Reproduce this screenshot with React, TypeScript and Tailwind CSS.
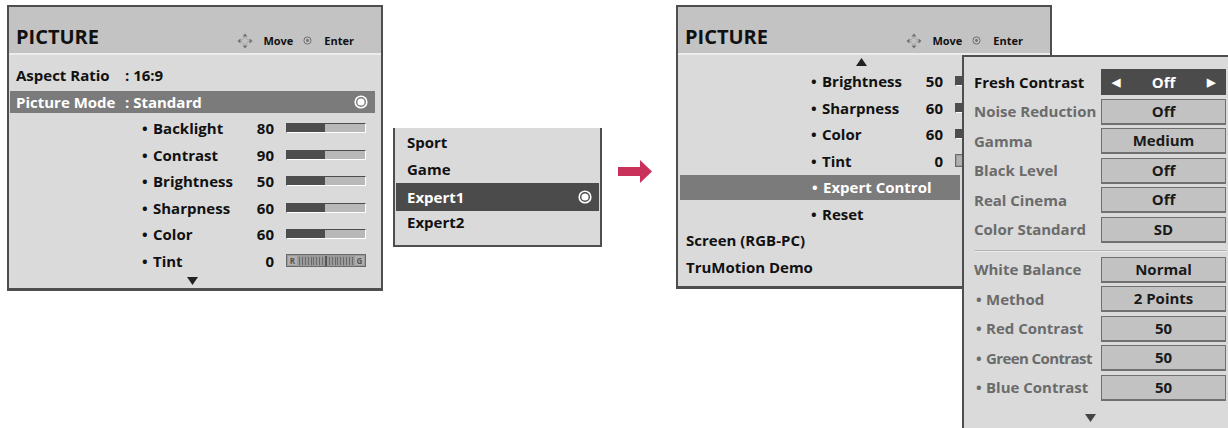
import React from 'react';

const subItems = [
  { label: 'Backlight', value: '80' },
  { label: 'Contrast', value: '90' },
  { label: 'Brightness', value: '50' },
  { label: 'Sharpness', value: '60' },
  { label: 'Color', value: '60' },
];

const expertRows = [
  { label: 'Noise Reduction', value: 'Off' },
  { label: 'Gamma', value: 'Medium' },
  { label: 'Black Level', value: 'Off' },
  { label: 'Real Cinema', value: 'Off' },
  { label: 'Color Standard', value: 'SD' },
];

const balanceRows = [
  { label: 'Method', value: '2 Points' },
  { label: 'Red Contrast', value: '50' },
  { label: 'Green Contrast', value: '50', tight: true },
  { label: 'Blue Contrast', value: '50' },
];

function MoveIcon() {
  return (
    <svg width="16" height="16" viewBox="0 0 16 16">
      <polygon points="8,0.5 10.5,3.5 5.5,3.5" fill="#6f6f6f" />
      <polygon points="8,15.5 10.5,12.5 5.5,12.5" fill="#6f6f6f" />
      <polygon points="0.5,8 3.5,5.5 3.5,10.5" fill="#6f6f6f" />
      <polygon points="15.5,8 12.5,5.5 12.5,10.5" fill="#6f6f6f" />
      <circle cx="8" cy="8" r="3.2" fill="none" stroke="#8a8a8a" strokeWidth="1" strokeDasharray="1.2 1" />
    </svg>
  );
}

function EnterIcon() {
  return (
    <svg width="9" height="9" viewBox="0 0 9 9">
      <circle cx="4.5" cy="4.5" r="3.6" fill="none" stroke="#6f6f6f" strokeWidth="1" />
      <circle cx="4.5" cy="4.5" r="1.4" fill="#6f6f6f" />
    </svg>
  );
}

function RadioIcon() {
  return (
    <svg width="14" height="14" viewBox="0 0 14 14">
      <circle cx="7" cy="7" r="5.8" fill="none" stroke="#ffffff" strokeWidth="1.6" />
      <circle cx="7" cy="7" r="3.6" fill="#ffffff" />
    </svg>
  );
}

function Triangle({ up = false }: { up?: boolean }) {
  return (
    <svg width="11" height="8" viewBox="0 0 11 8">
      {up ? <polygon points="5.5,0 11,8 0,8" fill="#222" /> : <polygon points="0,0 11,0 5.5,8" fill="#222" />}
    </svg>
  );
}

function Header() {
  return (
    <div className="h-[48px] bg-[#c3c3c3] border-b-2 border-[#ececec] flex items-end pb-[2px] pl-[7px] pr-[27px]">
      <span className="text-[20px] font-bold text-[#111] leading-[28px]">PICTURE</span>
      <div className="ml-auto flex items-center mb-[2px] text-[11px] font-bold text-[#111]">
        <MoveIcon />
        <span className="ml-[10px]">Move</span>
        <span className="ml-[10px]"><EnterIcon /></span>
        <span className="ml-[12px]">Enter</span>
      </div>
    </div>
  );
}

function Bar() {
  return (
    <div className="ml-[12px] w-[80px] h-[10px] shrink-0 flex border-t border-l border-[#4d4d4d] border-b border-r border-b-white border-r-white">
      <div className="w-[38px] bg-[#4d4d4d]" />
      <div className="flex-1 bg-[#b8b8b8]" />
    </div>
  );
}

function TintBar({ letters = true }: { letters?: boolean }) {
  const ticks = Array.from({ length: 19 });
  return (
    <div className="ml-[12px] w-[80px] h-[13px] shrink-0 bg-[#9a9a9a] border border-[#6a6a6a] flex items-center px-[1px]">
      <span className="w-[9px] h-[9px] bg-[#b0b0b0] text-[8px] leading-[9px] font-bold text-[#555] text-center">{letters ? 'R' : ''}</span>
      <div className="flex-1 flex items-center justify-between px-[2px]">
        {ticks.map((_, i) => (
          <span key={i} className={i === 9 ? 'w-[2px] h-[10px] bg-[#555]' : 'w-[1px] h-[8px] bg-[#6a6a6a]'} />
        ))}
      </div>
      <span className="w-[9px] h-[9px] bg-[#b0b0b0] text-[8px] leading-[9px] font-bold text-[#555] text-center">{letters ? 'G' : ''}</span>
    </div>
  );
}

function SubRow({ label, value, bar }: { label: string; value?: string; bar?: React.ReactNode }) {
  return (
    <div className="h-[26.5px] flex items-center pl-[133px] text-[15px] font-bold text-[#111]">
      <span className="w-[11px] shrink-0">•</span>
      <span className="w-[90px] shrink-0">{label}</span>
      <span className="w-[31px] shrink-0 text-right">{value}</span>
      {bar}
    </div>
  );
}

function LeftPanel() {
  return (
    <div className="ml-[7px] mt-[5px] w-[376px] h-[286px] bg-[#dadada] border-x-2 border-t-2 border-b-[3px] border-[#4e4e4e] flex flex-col">
      <Header />
      <div className="pt-[7px] flex flex-col">
        <div className="h-[26.5px] flex items-center pl-[7px] text-[15px] font-bold text-[#111]">
          <span className="w-[109px]">Aspect Ratio</span>
          <span>: 16:9</span>
        </div>
        <div className="h-[26.5px] flex items-center">
          <div className="ml-[1px] mr-[6px] flex-1 h-[22px] bg-[#7b7b7b] flex items-center pl-[6px] pr-[7px] text-[15px] font-bold text-white">
            <span className="w-[109px]">Picture Mode</span>
            <span>: Standard</span>
            <span className="ml-auto"><RadioIcon /></span>
          </div>
        </div>
        {subItems.map((s) => (
          <SubRow key={s.label} label={s.label} value={s.value} bar={<Bar />} />
        ))}
        <SubRow label="Tint" value="0" bar={<TintBar />} />
        <div className="flex pl-[178px] pt-[3px]">
          <Triangle />
        </div>
      </div>
    </div>
  );
}

function ModePopup() {
  return (
    <div className="ml-[10px] mt-[128px] w-[209px] h-[119px] bg-[#dadada] border-x-2 border-b-2 border-[#4e4e4e] pt-[1px] flex flex-col text-[15px] font-bold text-[#111]">
      <div className="h-[26.5px] flex items-center pl-[12px]">Sport</div>
      <div className="h-[26.5px] flex items-center pl-[12px]">Game</div>
      <div className="h-[26.5px] flex items-center">
        <div className="mx-[1px] flex-1 h-[28px] bg-[#4b4b4b] text-white flex items-center pl-[11px] pr-[7px] mt-[3px]">
          <span>Expert1</span>
          <span className="ml-auto"><RadioIcon /></span>
        </div>
      </div>
      <div className="h-[26.5px] flex items-center pl-[12px]">Expert2</div>
    </div>
  );
}

function ArrowMark() {
  return (
    <div className="ml-[16px] mt-[160px]">
      <svg width="34" height="23" viewBox="0 0 34 23">
        <rect x="0" y="7" width="23" height="9" fill="#c9305a" />
        <polygon points="22,0 34,11.5 22,23" fill="#c9305a" />
      </svg>
    </div>
  );
}

function ValueBox({ children, active = false }: { children: React.ReactNode; active?: boolean }) {
  return (
    <div
      className={
        active
          ? 'w-[125px] h-[26px] bg-[#4b4b4b] text-white flex items-center justify-between px-[11px] text-[15px] font-bold'
          : 'w-[125px] h-[26px] bg-[#c2c2c2] border border-[#707070] border-b-2 text-[#1a1a1a] flex items-center justify-center text-[15px] font-bold'
      }
    >
      {children}
    </div>
  );
}

function ExpertMenu() {
  return (
    <div className="absolute left-[286px] top-[50px] w-[266px] h-[380px] bg-[#dadada] border-l-2 border-t-2 border-[#4e4e4e] pt-[12px] pl-[10px] flex flex-col gap-[3.5px]">
      <div className="flex items-center">
        <span className="w-[127px] text-[15px] font-bold text-[#111]">Fresh Contrast</span>
        <ValueBox active>
          <span className="text-[11px]">◀</span>
          <span>Off</span>
          <span className="text-[11px]">▶</span>
        </ValueBox>
      </div>
      {expertRows.map((r) => (
        <div key={r.label} className="flex items-center">
          <span className="w-[127px] text-[15px] font-bold text-[#6b6b6b]">{r.label}</span>
          <ValueBox>{r.value}</ValueBox>
        </div>
      ))}
      <div className="mt-[4px] mb-[1px] mr-[2px] ml-[1px] h-[2px] border-t border-[#b3b3b3] border-b border-b-[#ececec]" />
      <div className="flex items-center">
        <span className="w-[127px] text-[15px] font-bold text-[#6b6b6b]">White Balance</span>
        <ValueBox>Normal</ValueBox>
      </div>
      {balanceRows.map((r) => (
        <div key={r.label} className="flex items-center">
          <span className={(r.tight ? 'tracking-[-0.6px] ' : '') + 'w-[127px] text-[15px] font-bold text-[#6b6b6b] flex'}>
            <span className="w-[12px] pl-[2px]">•</span>
            <span>{r.label}</span>
          </span>
          <ValueBox>{r.value}</ValueBox>
        </div>
      ))}
      <div className="pl-[111px] pt-[10px]">
        <svg width="11" height="8" viewBox="0 0 11 8">
          <polygon points="0,0 11,0 5.5,8" fill="#444" />
        </svg>
      </div>
    </div>
  );
}

function RightPanel() {
  return (
    <div className="ml-[24px] mt-[5px] relative w-[376px]">
      <div className="w-[376px] h-[284px] bg-[#dadada] border-x-2 border-t-2 border-b-[3px] border-[#4e4e4e] flex flex-col">
        <Header />
        <div className="flex pl-[178px] pt-[3px]">
          <Triangle up />
        </div>
        <div className="w-[284px] overflow-hidden flex flex-col pt-[2px]">
          <SubRow label="Brightness" value="50" bar={<Bar />} />
          <SubRow label="Sharpness" value="60" bar={<Bar />} />
          <SubRow label="Color" value="60" bar={<Bar />} />
          <SubRow label="Tint" value="0" bar={<TintBar letters={false} />} />
          <div className="h-[26.5px] flex items-center">
            <div className="mx-[2px] flex-1 h-[25px] bg-[#7b7b7b] flex items-center pl-[132px] text-[15px] font-bold text-white">
              <span className="w-[11px]">•</span>
              <span>Expert Control</span>
            </div>
          </div>
          <SubRow label="Reset" />
          <div className="h-[26.5px] flex items-center pl-[8px] text-[15px] font-bold text-[#111]">Screen (RGB-PC)</div>
          <div className="h-[26.5px] flex items-center pl-[8px] text-[15px] font-bold text-[#111]">TruMotion Demo</div>
        </div>
      </div>
      <ExpertMenu />
    </div>
  );
}

export default function App() {
  return (
    <div className="w-[1228px] h-[428px] bg-white flex items-start overflow-hidden font-['Open_Sans',sans-serif]">
      <LeftPanel />
      <ModePopup />
      <ArrowMark />
      <RightPanel />
    </div>
  );
}
